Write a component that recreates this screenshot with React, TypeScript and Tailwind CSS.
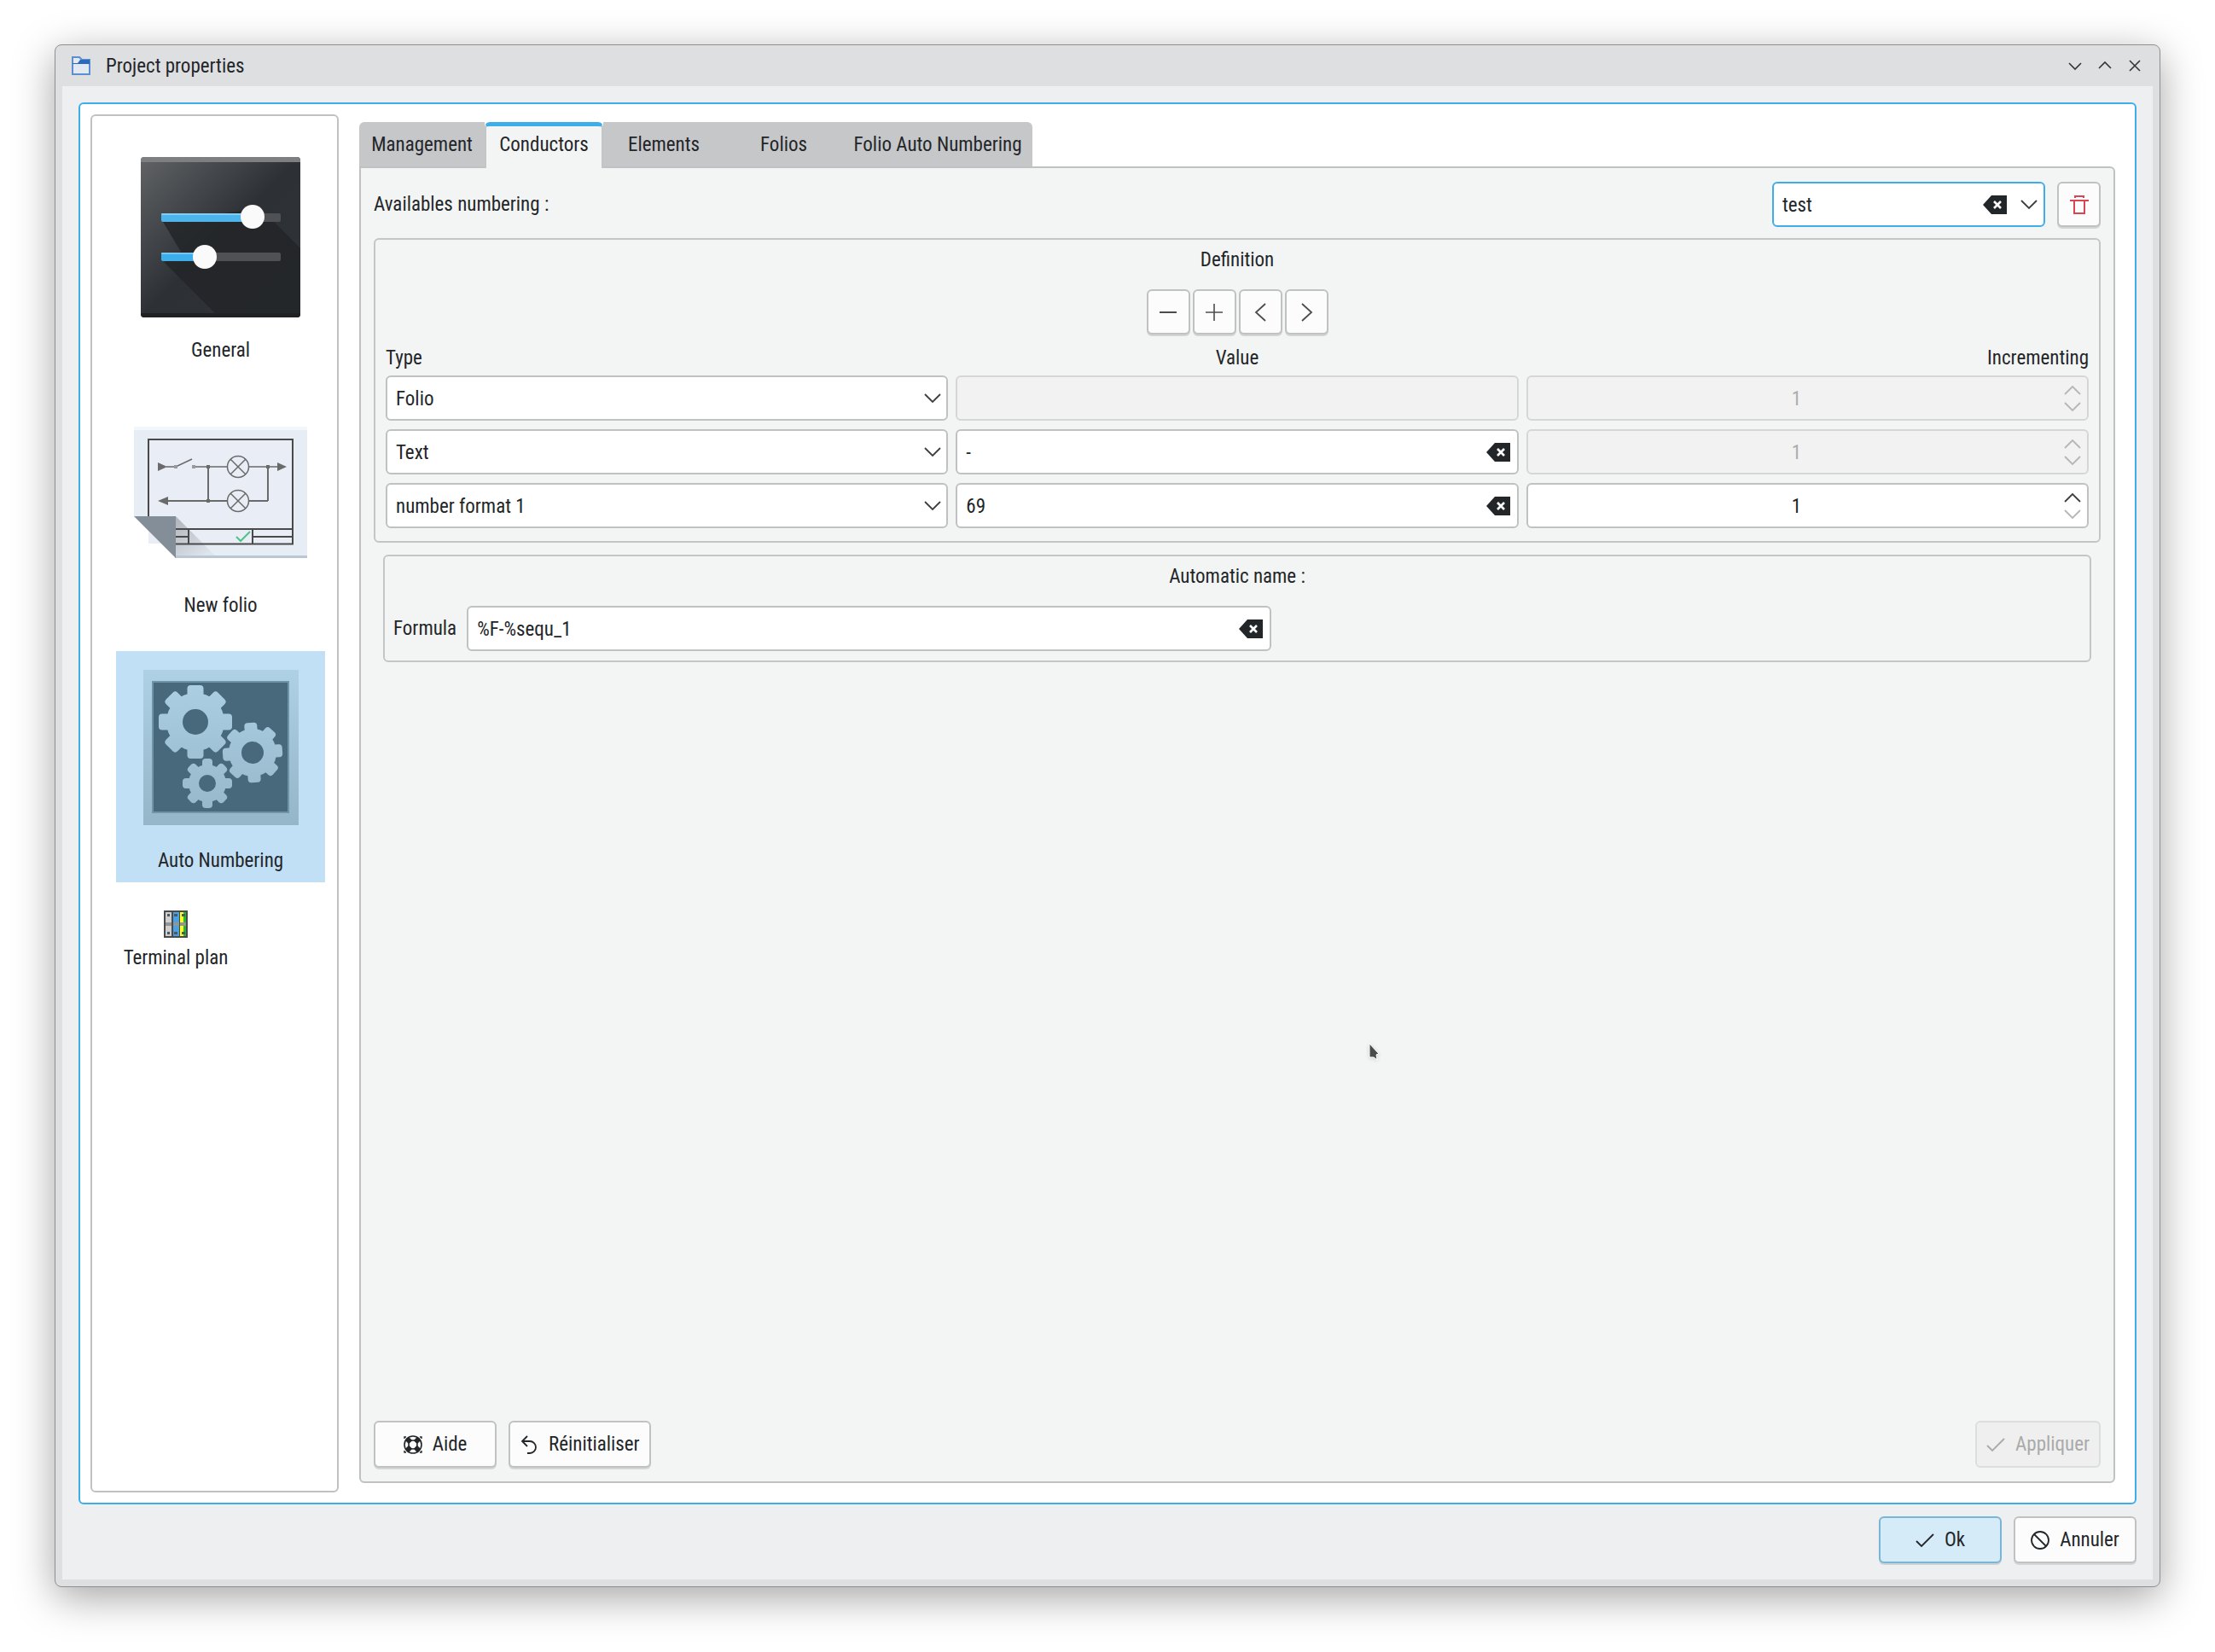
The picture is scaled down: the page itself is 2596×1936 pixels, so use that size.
import { useState, type ReactNode } from "react";
import clsx from "clsx";

/* ---------- Icons ---------- */

function ChevronDown({ className }: { className?: string }) {
  return (
    <svg width="20" height="12" viewBox="0 0 20 12" fill="none" stroke="currentColor" strokeWidth="1.8" className={className}>
      <path d="M1 1l9 9 9-9" />
    </svg>
  );
}

function ChevronUp({ className }: { className?: string }) {
  return (
    <svg width="20" height="12" viewBox="0 0 20 12" fill="none" stroke="currentColor" strokeWidth="1.8" className={className}>
      <path d="M1 11l9-9 9 9" />
    </svg>
  );
}

function ClearIcon() {
  return (
    <svg width="28" height="22" viewBox="0 0 28 22">
      <path d="M0 11L10 0h18v22H10z" fill="#232629" />
      <path d="M13 7l8 8M21 7l-8 8" stroke="#fff" strokeWidth="2.6" />
    </svg>
  );
}

function TrashIcon() {
  return (
    <svg width="22" height="22" viewBox="0 0 22 22" fill="none" stroke="#da4453" strokeWidth="2">
      <path d="M6 3V1h10v2M0 6h22M5 6v15h12V6" />
    </svg>
  );
}

function CheckIcon() {
  return (
    <svg width="22" height="22" viewBox="0 0 22 22" fill="none" stroke="currentColor" strokeWidth="1.8">
      <path d="M1 12l6 6L21 4" />
    </svg>
  );
}

function CancelIcon() {
  return (
    <svg width="22" height="22" viewBox="0 0 22 22" fill="none" stroke="currentColor" strokeWidth="1.8">
      <circle cx="11" cy="11" r="10" />
      <path d="M4 4l14 14" />
    </svg>
  );
}

function UndoIcon() {
  return (
    <svg width="22" height="22" viewBox="0 0 22 22" fill="none" stroke="currentColor" strokeWidth="1.8">
      <path d="M9 1L3 7l6 6M3 7h9a7 7 0 0 1 0 14H9" />
    </svg>
  );
}

function HelpIcon() {
  return (
    <svg width="22" height="22" viewBox="0 0 22 22" fill="none" stroke="currentColor">
      <circle cx="11" cy="11" r="10" strokeWidth="1.6" />
      <circle cx="11" cy="11" r="5" strokeWidth="1.6" />
      <path d="M4 4l4 4M18 4l-4 4M4 18l4-4M18 18l-4-4" strokeWidth="6" />
      <path d="M3 2H1v2M19 2h2v2M3 20H1v-2M19 20h2v-2" strokeWidth="1.4" />
    </svg>
  );
}

function ProjectIcon() {
  return (
    <svg width="22" height="22" viewBox="0 0 22 22">
      <path d="M1 1h8l3 3h9v17H1z" fill="#e3e9f1" stroke="#5b8fd0" strokeWidth="2" />
      <path d="M1 8h6l3-4h11v5H1z" fill="#2a6bbf" />
    </svg>
  );
}

function SlidersPicture() {
  return (
    <svg width="188" height="188" viewBox="0 0 188 188">
      <defs>
        <linearGradient id="tile" x1="0" y1="0" x2="1" y2="1">
          <stop offset="0" stopColor="#616366" />
          <stop offset="0.500" stopColor="#2d3135" />
          <stop offset="1" stopColor="#2f3236" />
        </linearGradient>
        <clipPath id="tileClip">
          <rect width="187" height="188" rx="4" />
        </clipPath>
      </defs>
      <g clipPath="url(#tileClip)">
        <rect width="188" height="188" fill="url(#tile)" />
        <path d="M140 60l48 48v80H92L27 123l20-12L26 76z" fill="#222427" opacity="0.8" />
        <rect width="188" height="6" fill="#7d7f81" />
        <rect y="183" width="188" height="5" fill="#1f2123" />
      </g>
      <rect x="24" y="66" width="140" height="10" rx="2" fill="#4f5154" />
      <rect x="24" y="66" width="104" height="10" rx="2" fill="#4db4ec" />
      <rect x="24" y="66" width="104" height="2" rx="1" fill="#85cdf3" />
      <rect x="24" y="112" width="140" height="10" rx="2" fill="#4f5154" />
      <rect x="24" y="112" width="50" height="10" rx="2" fill="#3daee9" />
      <rect x="24" y="112" width="50" height="2" rx="1" fill="#78c6f0" />
      <circle cx="131" cy="70" r="14" fill="#fafafa" />
      <circle cx="75" cy="117" r="14" fill="#fafafa" />
    </svg>
  );
}

function FolioPicture() {
  return (
    <svg width="203" height="154" viewBox="0 0 203 154" fill="none">
      <defs>
        <linearGradient id="fold" x1="49" y1="112" x2="80" y2="154" gradientUnits="userSpaceOnUse">
          <stop offset="0" stopColor="#b4b8be" />
          <stop offset="1" stopColor="#dfe5ed" />
        </linearGradient>
      </defs>
      <path d="M0 0h203v154H49L0 105z" fill="#e6edf5" />
      <path d="M0 0h203v4H0z" fill="#f3f6fa" />
      <path d="M48 151h155v3H48z" fill="#bac6d3" />
      <path d="M17 15h169v122H17z" fill="#e9edf5" />
      <path d="M0 106h50v45z" fill="#fff" />
      <path d="M49 105l46 46H49z" fill="url(#fold)" />
      <path d="M17 106V15h169v122.500H49M49 120h137M49 129h15M139 129h47M64 120v17M139 120v17" stroke="#4a4a4a" strokeWidth="2" />
      <path d="M0 105h49v49z" fill="#838e98" />
      <path d="M120 129l5 5 11-11" stroke="#4fc28a" strokeWidth="2" />
      <g stroke="#6a6a6a" strokeWidth="1.500">
        <path d="M38 47h11l19-9M70 47h39M135 47h34" />
        <path d="M87 47v40M157 47v40M39 87h70M135 87h22" strokeWidth="2" />
        <circle cx="122" cy="47" r="12.500" />
        <circle cx="122" cy="87" r="12.500" />
        <path d="M113 38l18 18M131 38l-18 18M113 78l18 18M131 78l-18 18" />
      </g>
      <path d="M28 42l11 5-11 5zM168 42l11 5-11 5zM40 82l-12 5 12 5z" fill="#6a6a6a" />
      <path d="M85 45h4v4h-4zM155 45h4v4h-4zM85 85h4v4h-4z" fill="#6a6a6a" />
      <path d="M47 45h4v4h-4zM68 45h4v4h-4z" fill="#9a9a9a" />
    </svg>
  );
}

function Gear({ x, y, r, root, hole, tooth, turn = 0 }: { x: number; y: number; r: number; root: number; hole: number; tooth: number; turn?: number }) {
  return (
    <g transform={`translate(${x} ${y}) rotate(${turn})`}>
      {[0, 45, 90, 135].map((angle) => (
        <rect key={angle} x={-tooth / 2} y={-r} width={tooth} height={r * 2} rx="4" fill="#fff" transform={`rotate(${angle})`} />
      ))}
      <circle r={root} fill="#fff" />
      <circle r={hole} fill="#000" />
    </g>
  );
}

function GearsPicture() {
  return (
    <svg width="182" height="182" viewBox="0 0 182 182">
      <defs>
        <linearGradient id="plate" x1="0" y1="0" x2="0" y2="1">
          <stop offset="0" stopColor="#aed1e5" />
          <stop offset="1" stopColor="#95b5c8" />
        </linearGradient>
        <mask id="gears">
          <Gear x={61} y={61} r={43} root={34} hole={15} tooth={19} />
          <Gear x={128} y={97} r={35} root={28} hole={13} tooth={15} turn={-4} />
          <Gear x={75} y={133} r={29} root={22} hole={10} tooth={12} />
        </mask>
      </defs>
      <rect width="182" height="182" fill="url(#plate)" />
      <rect x="11" y="14" width="159" height="153" fill="#48697c" stroke="#6f93a7" strokeWidth="2" />
      <rect width="182" height="182" fill="url(#plate)" mask="url(#gears)" />
    </svg>
  );
}

function TerminalPicture() {
  return (
    <svg width="28" height="32" viewBox="0 0 28 32">
      <path d="M0 0h28v32H0z" fill="#4a4a4a" />
      <path d="M2 2h7v28H2z" fill="#cfcfcf" />
      <path d="M11 2h7v28h-7z" fill="#4aa0e6" />
      <path d="M19 2h4v28h-4z" fill="#ffff1a" />
      <path d="M23 2h3v28h-3z" fill="#22b93a" />
      <path d="M2 14h7v4H2zM11 14h7v4h-7zM19 14h7v4h-7z" fill="#949494" />
      <path d="M4 4h3v3H4zM12 4h4v3h-4zM21 4h4v3h-4zM4 25h3v3H4zM12 25h4v3h-4zM21 25h4v3h-4z" fill="#4b5a5a" />
    </svg>
  );
}

/* ---------- Controls ---------- */

const fieldBox = "h-[53px] w-full rounded-md border-2 border-[#bfc1c2] bg-white px-[10px] pt-0.5 outline-none disabled:border-[#d5d7d7] disabled:bg-[#f2f2f2] disabled:text-[#acadae]";

function PushButton({ icon, children, disabled, primary }: { icon: ReactNode; children: ReactNode; disabled?: boolean; primary?: boolean }) {
  return (
    <button
      type="button"
      disabled={disabled}
      className={clsx(
        "flex h-[55px] min-w-[144px] items-center justify-center gap-3 rounded-md border-2 px-[11px]",
        disabled && "border-[#dcdddd] bg-[#efefef] text-[#a9aaab]",
        primary && "border-[#7ab5d6] bg-[#d6ebf8] shadow-[0_2px_0_#cfd3d6]",
        !disabled && !primary && "border-[#bfc1c2] bg-[#fcfcfc] shadow-[0_2px_0_#d3d5d6]"
      )}
    >
      {icon}
      <span>{children}</span>
    </button>
  );
}

function ToolButton({ label, children }: { label: string; children: ReactNode }) {
  return (
    <button
      type="button"
      aria-label={label}
      className="flex h-[53px] w-[51px] shrink-0 items-center justify-center rounded-md border-2 border-[#bfc1c2] bg-[#fcfcfc] text-[#4a4c4e] shadow-[0_2px_0_#d3d5d5]"
    >
      {children}
    </button>
  );
}

function ClearableInput({ id, label, value, onChange }: { id?: string; label?: string; value: string; onChange: (value: string) => void }) {
  return (
    <div className="relative w-full">
      <input id={id} aria-label={label} type="text" className={fieldBox} value={value} onChange={(e) => onChange(e.target.value)} />
      <button type="button" aria-label="Clear" className="absolute inset-y-0 right-[10px] flex items-center" onClick={() => onChange("")}>
        <ClearIcon />
      </button>
    </div>
  );
}

const types = ["Folio", "Text", "number format 1"];

interface Part {
  type: string;
  value: string | null;
  increment: number;
  fixed: boolean;
}

function PartRow({ part, onChange }: { part: Part; onChange: (part: Part) => void }) {
  return (
    <>
      <div className="relative">
        <select aria-label="Type" className={clsx(fieldBox, "appearance-none")} value={part.type} onChange={(e) => onChange({ ...part, type: e.target.value })}>
          {types.map((type) => (
            <option key={type}>{type}</option>
          ))}
        </select>
        <ChevronDown className="pointer-events-none absolute inset-y-0 right-2 my-auto text-[#3c3f42]" />
      </div>
      {part.value === null ? (
        <input aria-label="Value" type="text" disabled className={fieldBox} />
      ) : (
        <ClearableInput label="Value" value={part.value} onChange={(value) => onChange({ ...part, value })} />
      )}
      <div className="relative">
        <input
          aria-label="Incrementing"
          type="number"
          min={1}
          disabled={part.fixed}
          value={part.increment}
          onChange={(e) => onChange({ ...part, increment: Number(e.target.value) })}
          className={clsx(fieldBox, "pr-9 text-center [appearance:textfield] [&::-webkit-inner-spin-button]:appearance-none")}
        />
        <div className="absolute inset-y-0 right-[9px] flex flex-col items-center justify-center gap-2 text-[#b4b6b7]">
          <button type="button" aria-label="Increase" disabled={part.fixed} onClick={() => onChange({ ...part, increment: part.increment + 1 })}>
            <ChevronUp className={part.fixed ? "" : "text-[#3c3f42]"} />
          </button>
          <button type="button" aria-label="Decrease" disabled={part.increment <= 1} onClick={() => onChange({ ...part, increment: part.increment - 1 })}>
            <ChevronDown />
          </button>
        </div>
      </div>
    </>
  );
}

/* ---------- Window parts ---------- */

const pages = [
  { name: "General", picture: <SlidersPicture /> },
  { name: "New folio", picture: <FolioPicture /> },
  { name: "Auto Numbering", picture: <GearsPicture /> },
];

function PageList() {
  return (
    <nav className="flex w-[291px] shrink-0 flex-col gap-7 rounded-md border-2 border-[#bfc1c2] pt-[29px] pr-[14px] pl-7">
      {pages.map(({ name, picture }) => (
        <button
          key={name}
          type="button"
          className={clsx("flex h-[271px] flex-col items-center pt-[17px]", name === "Auto Numbering" && "bg-[#c2e0f5]")}
        >
          <span className="flex h-48 items-center">{picture}</span>
          <span className="mt-[21px]">{name}</span>
        </button>
      ))}
      <button type="button" className="flex w-[140px] flex-col items-center gap-2 pt-[5px]">
        <TerminalPicture />
        <span>Terminal plan</span>
      </button>
    </nav>
  );
}

const tabs = [
  { name: "Management", width: "w-[147px] rounded-tl-md" },
  { name: "Conductors", width: "w-[139px]" },
  { name: "Elements", width: "w-[142px]" },
  { name: "Folios", width: "w-[139px]" },
  { name: "Folio Auto Numbering", width: "w-[222px] rounded-tr-md" },
];

function TabBar() {
  return (
    <div role="tablist" className="flex h-[52px]">
      {tabs.map(({ name, width }) => (
        <button
          key={name}
          type="button"
          role="tab"
          aria-selected={name === "Conductors"}
          className={clsx(
            "shrink-0",
            width,
            name === "Conductors"
              ? "relative h-[54px] rounded-t-md border-x-2 border-t-[5px] border-x-[#c3c5c6] border-t-[#3daee9] bg-[#f3f5f4] pb-[5px]"
              : "bg-[#c6c7c9] pt-0.5"
          )}
        >
          {name}
        </button>
      ))}
    </div>
  );
}

function ConductorsPanel() {
  const [numbering, setNumbering] = useState("test");
  const [formula, setFormula] = useState("%F-%sequ_1");
  const [parts, setParts] = useState<Part[]>([
    { type: "Folio", value: null, increment: 1, fixed: true },
    { type: "Text", value: "-", increment: 1, fixed: true },
    { type: "number format 1", value: "69", increment: 1, fixed: false },
  ]);

  return (
    <div className="flex flex-1 flex-col rounded-md rounded-tl-none border-2 border-[#bfc1c2] bg-[#f3f5f4] px-[15px] py-4">
      <div className="flex items-center gap-[14px]">
        <label htmlFor="numbering" className="mr-auto">
          Availables numbering :
        </label>
        <div className="relative w-80">
          <input
            id="numbering"
            type="text"
            role="combobox"
            aria-expanded="false"
            aria-controls="numbering"
            value={numbering}
            onChange={(e) => setNumbering(e.target.value)}
            className="h-[53px] w-full rounded-md border-2 border-[#3daee9] bg-white px-[10px] pt-0.5 outline-none"
          />
          <div className="absolute inset-y-0 right-[9px] flex items-center gap-4">
            <button type="button" aria-label="Clear" onClick={() => setNumbering("")}>
              <ClearIcon />
            </button>
            <button type="button" aria-label="Show list" className="text-[#3c3f42]">
              <ChevronDown />
            </button>
          </div>
        </div>
        <ToolButton label="Delete numbering">
          <TrashIcon />
        </ToolButton>
      </div>

      {/* Definition */}
      <section className="mt-[13px] rounded-md border-2 border-[#c3c5c6] px-3 pt-2 pb-[15px]">
        <h2 className="text-center">Definition</h2>
        <div className="mt-[18px] flex justify-center gap-[3px]">
          <ToolButton label="Remove part">
            <svg width="20" height="20" viewBox="0 0 20 20" stroke="currentColor" strokeWidth="2">
              <path d="M0 10h20" />
            </svg>
          </ToolButton>
          <ToolButton label="Add part">
            <svg width="20" height="20" viewBox="0 0 20 20" stroke="currentColor" strokeWidth="1.6">
              <path d="M0 10h20M10 0v20" />
            </svg>
          </ToolButton>
          <ToolButton label="Move left">
            <svg width="22" height="22" viewBox="0 0 22 22" fill="none" stroke="currentColor" strokeWidth="1.8">
              <path d="M17 1L6 11l11 10" />
            </svg>
          </ToolButton>
          <ToolButton label="Move right">
            <svg width="22" height="22" viewBox="0 0 22 22" fill="none" stroke="currentColor" strokeWidth="1.8">
              <path d="M6 1l11 10L6 21" />
            </svg>
          </ToolButton>
        </div>
        <div className="mt-3 grid grid-cols-3">
          <span>Type</span>
          <span className="text-center">Value</span>
          <span className="text-right">Incrementing</span>
        </div>
        <div className="mt-1 grid grid-cols-3 gap-x-[9px] gap-y-[10px]">
          {parts.map((part, i) => (
            <PartRow key={i} part={part} onChange={(next) => setParts(parts.map((p, j) => (j === i ? next : p)))} />
          ))}
        </div>
      </section>

      {/* Automatic name */}
      <section className="mx-[11px] mt-[14px] rounded-md border-2 border-[#c3c5c6] px-[10px] pt-2 pb-[11px]">
        <h2 className="text-center">Automatic name :</h2>
        <div className="mt-[18px] flex w-[52%] items-center gap-3">
          <label htmlFor="formula">Formula</label>
          <ClearableInput id="formula" value={formula} onChange={setFormula} />
        </div>
      </section>

      <div className="mt-auto flex gap-[14px]">
        <PushButton icon={<HelpIcon />}>Aide</PushButton>
        <PushButton icon={<UndoIcon />}>Réinitialiser</PushButton>
        <div className="ml-auto">
          <PushButton icon={<CheckIcon />} disabled>
            Appliquer
          </PushButton>
        </div>
      </div>
    </div>
  );
}

function TitleBar() {
  return (
    <header className="flex h-12 items-center pr-[21px] pl-[19px]">
      <ProjectIcon />
      <h1 className="ml-[18px] pt-0.5">Project properties</h1>
      <div className="ml-auto flex items-center gap-[19px] text-[#31363b]">
        <button type="button" aria-label="Minimize">
          <svg width="16" height="16" viewBox="0 0 16 16" fill="none" stroke="currentColor" strokeWidth="1.6">
            <path d="M1 5l7 7 7-7" />
          </svg>
        </button>
        <button type="button" aria-label="Maximize">
          <svg width="16" height="16" viewBox="0 0 16 16" fill="none" stroke="currentColor" strokeWidth="1.6">
            <path d="M1 11l7-7 7 7" />
          </svg>
        </button>
        <button type="button" aria-label="Close">
          <svg width="16" height="16" viewBox="0 0 16 16" fill="none" stroke="currentColor" strokeWidth="1.6">
            <path d="M2 2l12 12M14 2L2 14" />
          </svg>
        </button>
      </div>
    </header>
  );
}

export default function App() {
  return (
    <div className="relative flex min-h-screen bg-white px-16 pt-[52px] pb-[76px] font-['Roboto_Condensed','Noto_Sans',sans-serif] text-[23px] leading-8 text-[#232629]">
      <div className="flex flex-1 flex-col rounded-lg border border-[#8d8f91] bg-[#dedfe1] shadow-[0_12px_48px_rgba(0,0,0,0.36)]">
        <TitleBar />
        <div className="mx-2 mb-2 flex flex-1 flex-col bg-[#eeeff1] p-[19px]">
          <main className="flex flex-1 gap-6 rounded-md border-2 border-[#3daee9] bg-white p-3">
            <PageList />
            <div className="flex flex-1 flex-col pt-[9px] pr-[11px] pb-[11px]">
              <TabBar />
              <ConductorsPanel />
            </div>
          </main>
          <footer className="mt-[14px] flex justify-end gap-[14px]">
            <PushButton icon={<CheckIcon />} primary>
              Ok
            </PushButton>
            <PushButton icon={<CancelIcon />}>Annuler</PushButton>
          </footer>
        </div>
      </div>

      {/* Mouse pointer */}
      <svg width="14" height="22" viewBox="0 0 14 22" className="pointer-events-none absolute top-[1222px] left-[1604px] drop-shadow-sm">
        <path d="M1 1l11 12-3 1 1 6-4-3-5 0z" fill="#4a4a4a" stroke="#fff" strokeWidth="1" />
      </svg>
    </div>
  );
}
